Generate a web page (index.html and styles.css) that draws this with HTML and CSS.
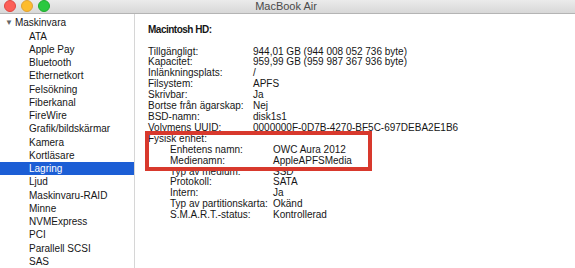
FILE: index.html
```html
<!DOCTYPE html>
<html lang="sv">
<head>
    <meta charset="UTF-8">
    <title>MacBook Air</title>
    <link rel="stylesheet" href="styles.css">
</head>
<body>
    <div class="window">
        <div class="titlebar">
            <div class="lights">
                <span class="light red"></span>
                <span class="light yellow"></span>
                <span class="light green"></span>
            </div>
            <div class="title">MacBook Air</div>
        </div>
        <div class="main">
            <ul class="sidebar">
                <li class="group"><span class="arrow">&#9660;</span>Maskinvara</li>
                <li>ATA</li>
                <li>Apple Pay</li>
                <li>Bluetooth</li>
                <li>Ethernetkort</li>
                <li>Felsökning</li>
                <li>Fiberkanal</li>
                <li>FireWire</li>
                <li>Grafik/bildskärmar</li>
                <li>Kamera</li>
                <li>Kortläsare</li>
                <li class="selected">Lagring</li>
                <li>Ljud</li>
                <li>Maskinvaru-RAID</li>
                <li>Minne</li>
                <li>NVMExpress</li>
                <li>PCI</li>
                <li>Parallell SCSI</li>
                <li>SAS</li>
            </ul>
            <div class="content">
                <div class="heading">Macintosh HD:</div>
                <div class="info">
                    <span>Tillgängligt:</span><span>944,01 GB (944 008 052 736 byte)</span>
                    <span>Kapacitet:</span><span>959,99 GB (959 987 367 936 byte)</span>
                    <span>Inlänkningsplats:</span><span>/</span>
                    <span>Filsystem:</span><span>APFS</span>
                    <span>Skrivbar:</span><span>Ja</span>
                    <span>Bortse från ägarskap:</span><span>Nej</span>
                    <span>BSD-namn:</span><span>disk1s1</span>
                    <span>Volymens UUID:</span><span>0000000F-0D7B-4270-BF5C-697DEBA2E1B6</span>
                    <span class="full">Fysisk enhet:</span>
                </div>
                <div class="info nested">
                    <span>Enhetens namn:</span><span>OWC Aura 2012</span>
                    <span>Medienamn:</span><span>AppleAPFSMedia</span>
                    <span>Typ av medium:</span><span>SSD</span>
                    <span>Protokoll:</span><span>SATA</span>
                    <span>Intern:</span><span>Ja</span>
                    <span>Typ av partitionskarta:</span><span>Okänd</span>
                    <span>S.M.A.R.T.-status:</span><span>Kontrollerad</span>
                </div>
                <div class="highlight-box"></div>
            </div>
        </div>
    </div>
</body>
</html>
```

FILE: styles.css
```css
body {
    margin: 0;
    font-family: "Liberation Sans", Arial, sans-serif;
    color: #161616;
    background: #fff;
}
.window {
    width: 575px;
    height: 268px;
    overflow: hidden;
    display: flex;
    flex-direction: column;
}
.titlebar {
    height: 15px;
    border-bottom: 1px solid #b4b4b4;
    background: linear-gradient(#ebebeb, #d8d8d8);
    display: flex;
    align-items: center;
}
.lights {
    display: flex;
    gap: 5px;
    padding-left: 4px;
    margin-top: -1px;
}
.light {
    width: 12px;
    height: 12px;
    border-radius: 50%;
    box-sizing: border-box;
}
.red {
    background: #fc5f57;
    border: 1px solid #df4741;
}
.yellow {
    background: #fdbc2e;
    border: 1px solid #dea236;
}
.green {
    background: #2ac840;
    border: 1px solid #1eab2e;
}
.title {
    flex: 1;
    text-align: center;
    font-size: 11px;
    color: #4a4a4a;
    margin-left: -53px;
    margin-top: -1px;
}
.main {
    flex: 1;
    display: flex;
}
.sidebar {
    list-style: none;
    margin: 0;
    padding: 2.2px 0 0 0;
    width: 134px;
    border-right: 1px solid #d6d6d6;
    font-size: 10px;
}
.sidebar li {
    line-height: 13.25px;
    height: 13.25px;
    padding-left: 29px;
    white-space: nowrap;
}
.sidebar .group {
    padding-left: 5px;
}
.arrow {
    font-size: 8px;
    color: #666;
    margin-right: 2px;
    vertical-align: 1px;
}
.sidebar .selected {
    background: #1c5ed5;
    color: #fff;
}
.content {
    flex: 1;
    position: relative;
    padding: 10px 0 0 13px;
    font-size: 10px;
}
.heading {
    font-weight: bold;
    letter-spacing: -0.5px;
    line-height: 11px;
    margin-bottom: 11.5px;
}
.info {
    display: grid;
    grid-template-columns: 105px auto;
    line-height: 10.9px;
    white-space: nowrap;
}
.info .full {
    grid-column: 1 / 3;
}
.nested {
    padding-left: 22px;
    grid-template-columns: 103px auto;
}
.highlight-box {
    position: absolute;
    left: 10px;
    top: 117px;
    width: 227px;
    height: 40px;
    box-sizing: border-box;
    border: 4px solid #d8392d;
}
```
